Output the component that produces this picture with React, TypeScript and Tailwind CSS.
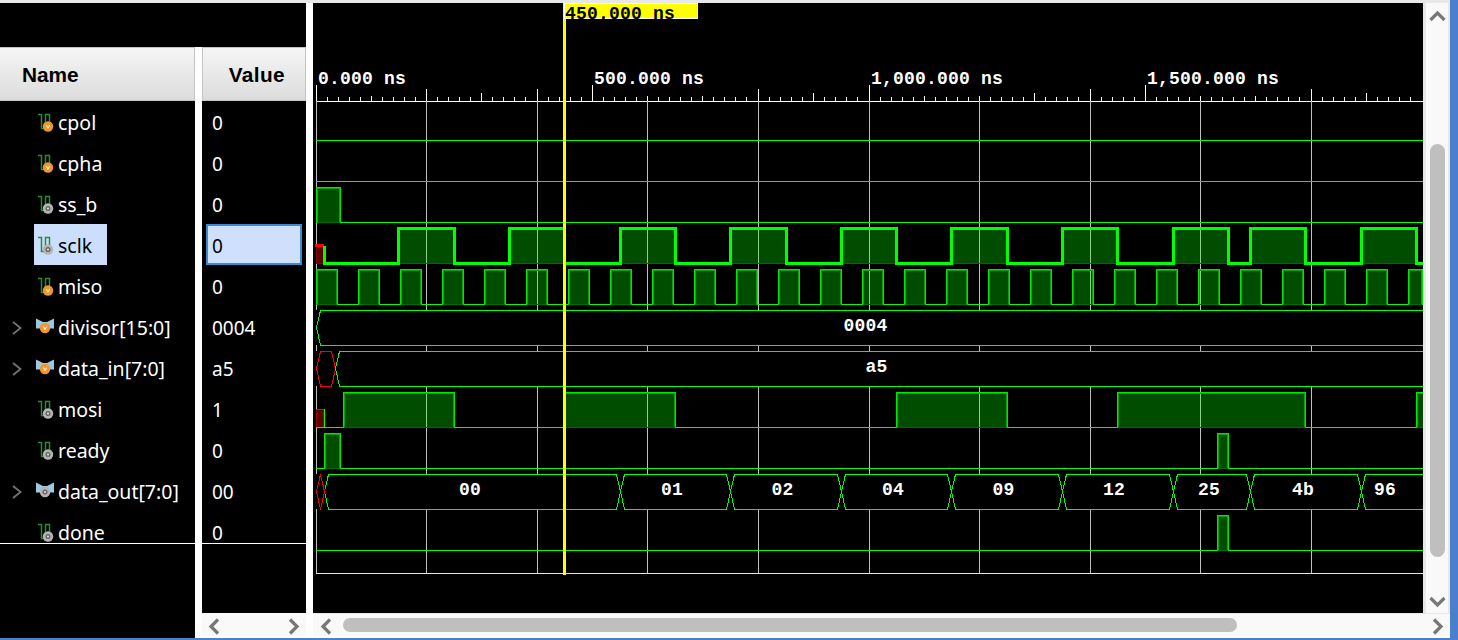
import { ReactNode } from 'react';

const GRID = [316, 426, 537, 647, 758, 869, 979, 1090, 1200, 1311];

const TICK_TOPS: Record<number, number> = {
  0: 85, 25: 85, 50: 85, 75: 85,
  10: 89, 20: 89, 40: 89, 70: 89, 90: 89,
  15: 93, 45: 93, 65: 93, 95: 93,
  5: 96, 30: 96, 35: 96, 55: 96, 60: 96, 80: 96, 85: 96,
};

const TICKS = Array.from({ length: 100 }, (_, k) => ({
  x: GRID[Math.floor(k / 10)] + Math.round((k % 10) * 11.05) + 0.5,
  top: TICK_TOPS[k] ?? 97,
}));

const SIGNALS = [
  { name: 'cpol', value: '0', kind: 'scalar', tone: 'orange' },
  { name: 'cpha', value: '0', kind: 'scalar', tone: 'orange' },
  { name: 'ss_b', value: '0', kind: 'scalar', tone: 'gray' },
  { name: 'sclk', value: '0', kind: 'scalar', tone: 'gray', selected: true },
  { name: 'miso', value: '0', kind: 'scalar', tone: 'orange' },
  { name: 'divisor[15:0]', value: '0004', kind: 'vector', tone: 'orange' },
  { name: 'data_in[7:0]', value: 'a5', kind: 'vector', tone: 'orange' },
  { name: 'mosi', value: '1', kind: 'scalar', tone: 'gray' },
  { name: 'ready', value: '0', kind: 'scalar', tone: 'gray' },
  { name: 'data_out[7:0]', value: '00', kind: 'vector', tone: 'gray' },
  { name: 'done', value: '0', kind: 'scalar', tone: 'gray' },
];

const SCLK_EDGES = [
  398.5, 454.5, 509.5, 564.5, 620.5, 675.5, 730.5, 786.5, 841.5, 896.5, 951.5, 1007.5, 1062.5,
  1117.5, 1173.5, 1228.5, 1250.5, 1305.5, 1361.5, 1416.5,
];

const MISO_PULSES = Array.from({ length: 27 }, (_, k): [number, number] => [
  316.5 + 42 * k,
  k === 26 ? 1422 : 337.5 + 42 * k,
]);

const OUT_EDGES = [620.5, 730.5, 841.5, 951.5, 1062.5, 1173.5, 1250.5, 1361.5];

const OUT_LABELS = [
  { x: 470, text: '00' },
  { x: 672, text: '01' },
  { x: 782.5, text: '02' },
  { x: 893, text: '04' },
  { x: 1003.5, text: '09' },
  { x: 1114, text: '12' },
  { x: 1209, text: '25' },
  { x: 1303, text: '4b' },
  { x: 1385, text: '96' },
];

function SignalIcon({ kind, tone }: { kind: string; tone: string }) {
  const center = kind === 'vector' ? { x: 9, y: 10 } : { x: 12, y: 13.5 };
  return (
    <svg width="18" height="20" viewBox="0 0 18 20" className="shrink-0">
      {kind === 'vector' ? (
        <path d="M0 0.5 L7 4 H11 L18 0.5 V10.5 H0 Z" fill="#9cc9e2" />
      ) : (
        <path d="M2 1.5 H5.5 V15.5 H9.5 V1.5 H13.5 V10" fill="none" stroke="#2b8a3a" strokeWidth="1.5" />
      )}
      {tone === 'orange' ? (
        <>
          <circle cx={center.x} cy={center.y} r="5.2" fill="#f0962a" />
          <path
            d={`M${center.x - 1.6} ${center.y - 1.5} L${center.x} ${center.y + 1.8} L${center.x + 1.6} ${center.y - 1.5}`}
            fill="none"
            stroke="#fff"
            strokeWidth="1"
          />
        </>
      ) : (
        <>
          <circle cx={center.x} cy={center.y} r="5.2" fill="#b4b4b4" />
          <circle cx={center.x} cy={center.y} r="2.5" fill="#666" />
          <circle cx={center.x} cy={center.y} r="1" fill="#eee" />
        </>
      )}
    </svg>
  );
}

function Expander() {
  return (
    <svg width="10" height="14" viewBox="0 0 10 14" className="shrink-0">
      <path d="M1 1 L8.5 7 L1 13" fill="none" stroke="#707070" strokeWidth="2" />
    </svg>
  );
}

function Arrow({ dir, className = '' }: { dir: 'up' | 'down' | 'left' | 'right'; className?: string }) {
  const d = {
    up: 'M1.5 10 L8.5 3 L15.5 10',
    down: 'M1.5 3 L8.5 10 L15.5 3',
    left: 'M10 1.5 L3 8.5 L10 15.5',
    right: 'M3 1.5 L10 8.5 L3 15.5',
  }[dir];
  const vertical = dir === 'up' || dir === 'down';
  return (
    <svg
      width={vertical ? 17 : 13}
      height={vertical ? 13 : 17}
      viewBox={vertical ? '0 0 17 13' : '0 0 13 17'}
      className={`shrink-0 ${className}`}
    >
      <path d={d} fill="none" stroke="#777" strokeWidth="3.2" />
    </svg>
  );
}

function Header({ children, className }: { children: ReactNode; className: string }) {
  return (
    <div
      className={`h-[54px] pt-[2px] flex items-center border border-[#c4c4c4] bg-gradient-to-b from-[#f6f6f6] to-[#dcdcdc] text-[20.8px] font-bold text-black font-['Liberation_Sans',sans-serif] ${className}`}
    >
      {children}
    </div>
  );
}

function Pulses({ pulses, hi, base }: { pulses: [number, number][]; hi: number; base: number }) {
  const segments: [number, number][] = [];
  let cursor = 316;
  pulses.forEach(([a, b]) => {
    if (a > cursor) segments.push([cursor, a]);
    cursor = b;
  });
  segments.push([cursor, 1423]);
  return (
    <g shapeRendering="crispEdges">
      {segments.map(([a, b]) => (
        <path key={a} d={`M${a} ${base + 0.5} H${b}`} stroke="#00ff00" fill="none" />
      ))}
      {pulses.map(([a, b]) => (
        <g key={a}>
          <rect x={a} y={hi + 0.5} width={b - a} height={base - hi} fill="#00ff00" fillOpacity="0.3" />
          <path d={`M${a} ${base + 0.5} H${b}`} stroke="#006c00" fill="none" />
          <path d={`M${a + 1} ${base} V${hi + 1.5} H${b - 1} V${base}`} stroke="#00a800" fill="none" />
          <path d={`M${a} ${base + 1} V${hi + 0.5} H${b} V${base + 1}`} stroke="#00e800" fill="none" />
        </g>
      ))}
    </g>
  );
}

function Sclk() {
  const hi = 228.5;
  const lo = 263.5;
  let d = `M324.5 245.5 V${lo}`;
  let up = true;
  SCLK_EDGES.forEach((x) => {
    d += ` H${x} V${up ? hi : lo}`;
    up = !up;
  });
  d += ' H1423';
  const fills: [number, number][] = [];
  for (let i = 0; i < SCLK_EDGES.length; i += 2) fills.push([SCLK_EDGES[i], SCLK_EDGES[i + 1]]);
  return (
    <g shapeRendering="crispEdges">
      {fills.map(([a, b]) => (
        <g key={a}>
          <rect x={a} y={hi} width={b - a} height={lo - hi} fill="#00ff00" fillOpacity="0.3" />
          <path d={`M${a} ${lo} H${b}`} stroke="#006c00" fill="none" />
        </g>
      ))}
      <rect x="316.5" y="245.5" width="7" height="18" fill="#5a0000" stroke="#8a0000" />
      <path d="M315 245.5 H324" stroke="#ff0000" strokeWidth="3" fill="none" />
      <path d={d} fill="none" stroke="#00ff00" strokeWidth="3" />
    </g>
  );
}

function Bus({ edges, top, start }: { edges: number[]; top: number; start: number }) {
  const mid = top + 17.5;
  const bot = top + 35;
  const half = 4;
  const points = [start, ...edges, 1450];
  return (
    <g shapeRendering="crispEdges">
      <rect x="316" y={top} width="1107" height="35" fill="#000" />
      {points.slice(0, -1).map((a, i) => {
        const b = points[i + 1];
        return (
          <path
            key={a}
            d={`M${a} ${mid} L${a + half} ${top + 0.5} H${b - half} L${b} ${mid} L${b - half} ${bot + 0.5} H${a + half} Z`}
            fill="none"
            stroke="#00ff00"
          />
        );
      })}
    </g>
  );
}

function Waveform() {
  return (
    <svg
      width="1110"
      height="610"
      viewBox="313 3 1110 610"
      className="block shrink-0 bg-black font-['Liberation_Mono',monospace] font-bold text-[18px] tracking-[0.2px]"
    >
      <defs>
        <clipPath id="cursor-label">
          <rect x="564" y="3" width="134" height="16" />
        </clipPath>
      </defs>

      {/* ruler */}
      <g shapeRendering="crispEdges" stroke="#fff">
        <path d="M316 101.5 H1423" />
        {TICKS.map((t) => (
          <path key={t.x} d={`M${t.x} ${t.top} V101`} />
        ))}
      </g>
      {[
        { x: 318, text: '0.000 ns' },
        { x: 594, text: '500.000 ns' },
        { x: 871, text: '1,000.000 ns' },
        { x: 1147, text: '1,500.000 ns' },
      ].map((l) => (
        <text key={l.x} x={l.x} y="84" fill="#fff">
          {l.text}
        </text>
      ))}

      {/* time grid */}
      <g shapeRendering="crispEdges" stroke="#c0c0c0">
        {GRID.map((x) => (
          <path key={x} d={`M${x + 0.5} 101 V573`} />
        ))}
        <path d="M316 573.5 H1423" stroke="#e4e4e4" />
      </g>

      {/* cpol, cpha */}
      <g shapeRendering="crispEdges" stroke="#00ff00">
        <path d="M316 140.5 H1423" />
        <path d="M316 181.5 H1423" />
      </g>

      <Pulses pulses={[[316.5, 340.5]]} hi={187} base={222} />
      <Sclk />
      <Pulses pulses={MISO_PULSES} hi={269} base={304} />

      <Bus edges={[]} top={310} start={316.5} />
      <text x="865.5" y="331" fill="#fff" textAnchor="middle">
        0004
      </text>

      <g shapeRendering="crispEdges">
        <rect x="316" y="351" width="1107" height="35" fill="#000" />
        <path
          d="M316.5 368.5 L320.5 351.5 H331.5 L335.5 368.5 L331.5 386.5 H320.5 Z"
          fill="none"
          stroke="#ff0000"
        />
        <path d="M1450 351.5 H339.5 L335.5 368.5 L339.5 386.5 H1450" fill="none" stroke="#00ff00" />
      </g>
      <text x="876.5" y="372" fill="#fff" textAnchor="middle">
        a5
      </text>

      <Pulses
        pulses={[
          [343.5, 454.5],
          [564.5, 675.5],
          [896.5, 1007.5],
          [1117.5, 1305.5],
          [1416.5, 1424],
        ]}
        hi={392}
        base={427}
      />
      <g shapeRendering="crispEdges">
        <rect x="316.5" y="409.5" width="7" height="18" fill="#5a0000" stroke="#a00000" />
        <path d="M316 427.5 H324 M324.5 427.5 V409.5 H316" fill="none" stroke="#00ff00" />
        <path d="M316 409.5 H324" stroke="#ff0000" />
      </g>

      <Pulses
        pulses={[
          [324.5, 340.5],
          [1217.5, 1228.5],
        ]}
        hi={433}
        base={468}
      />

      <Bus edges={OUT_EDGES} top={474} start={324.5} />
      <path
        d="M316.5 491.5 L320.5 474.5 L324.5 491.5 L320.5 509.5 Z"
        fill="none"
        stroke="#ff0000"
        shapeRendering="crispEdges"
      />
      {OUT_LABELS.map((l) => (
        <text key={l.x} x={l.x} y="495" fill="#fff" textAnchor="middle">
          {l.text}
        </text>
      ))}

      <Pulses pulses={[[1217.5, 1228.5]]} hi={515} base={550} />

      {/* cursor */}
      <rect x="563" y="3" width="3" height="572" fill="#ffff00" />
      <rect x="564.5" y="3.5" width="133" height="15" fill="#ffff00" stroke="#fff" shapeRendering="crispEdges" />
      <text x="565" y="19" fill="#000" clipPath="url(#cursor-label)">
        450.000 ns
      </text>
    </svg>
  );
}

export default function App() {
  const lastIndex = SIGNALS.length - 1;
  return (
    <div className="w-[1458px] h-[640px] overflow-hidden bg-[#4a7fcf] font-['Noto_Sans',sans-serif]">
      <div className="w-[1450px] h-[638px] flex flex-col bg-white">
        <div className="h-[3px] shrink-0 bg-[#e8e8e8]" />
        <div className="flex flex-1 min-h-0">
          {/* left side: name and value panes */}
          <div className="w-[306px] shrink-0 flex flex-col bg-black">
            <div className="h-[44px] shrink-0" />
            <div className="flex flex-1 min-h-0 bg-white gap-[7px]">
              <div className="w-[195px] bg-black">
                <Header className="pl-[22px] border-l-0">Name</Header>
                <div className="h-[443px] border-b border-white">
                  {SIGNALS.map((s, i) => (
                    <div
                      key={s.name}
                      className={`flex ${i === lastIndex ? 'h-[32px] items-end' : 'h-[41px] items-center'}`}
                    >
                      <div className="w-[34px] pl-[12px] pt-[2px] flex">{s.kind === 'vector' && <Expander />}</div>
                      <div
                        className={`h-full pl-[2px] pt-[2px] flex gap-[4px] text-[19.5px] leading-[20px] ${i === lastIndex ? 'items-end' : 'items-center'} ${s.selected ? 'w-[73px] bg-[#cbdffc] text-black' : 'text-white'}`}
                      >
                        <SignalIcon kind={s.kind} tone={s.tone} />
                        <span>{s.name}</span>
                      </div>
                    </div>
                  ))}
                </div>
              </div>
              <div className="w-[104px] flex flex-col bg-black">
                <Header className="justify-end pr-[20px] tracking-[0.4px]">Value</Header>
                <div className="h-[443px] border-b border-white">
                  {SIGNALS.map((s, i) => (
                    <div
                      key={s.name}
                      className={`px-[4px] flex text-[19px] leading-[20px] ${i === lastIndex ? 'h-[32px] items-end' : 'h-[41px] items-center'}`}
                    >
                      <div
                        className={`w-full h-full pt-[2px] flex ${i === lastIndex ? 'items-end' : 'items-center'} ${s.selected ? 'bg-[#cfe0fc] text-black border-2 border-[#3d8bcd] pl-[4px]' : 'text-white pl-[6px]'}`}
                      >
                        {s.value}
                      </div>
                    </div>
                  ))}
                </div>
                <div className="flex-1" />
                <div className="h-[23px] shrink-0 bg-[#f9f9f9] flex items-center justify-between px-[6px]">
                  <Arrow dir="left" className="mt-[3px]" />
                  <Arrow dir="right" className="mt-[3px]" />
                </div>
                <div className="h-[2px] shrink-0 bg-white" />
              </div>
            </div>
          </div>
          <div className="w-[7px] shrink-0" />

          {/* right side: waveform and scrollbars */}
          <div className="flex-1 min-w-0 flex flex-col">
            <div className="h-[610px] shrink-0 flex">
              <Waveform />
              <div className="flex-1 flex flex-col items-center bg-[#f9f9f9] border-l-[3px] border-r-2 border-[#e8e8e8] pt-[7px] pb-[5px]">
                <Arrow dir="up" />
                <div className="w-[15px] h-[413px] mt-[121px] rounded-full bg-[#bfbfbf]" />
                <div className="flex-1" />
                <Arrow dir="down" />
              </div>
            </div>
            <div className="h-[23px] shrink-0 bg-[#f9f9f9] border-t border-[#e8e8e8] flex items-center pl-[7px] pr-[6px]">
              <Arrow dir="left" className="mt-[3px]" />
              <div className="w-[894px] h-[14px] ml-[10px] rounded-full bg-[#bfbfbf]" />
              <div className="flex-1" />
              <Arrow dir="right" className="mt-[3px]" />
            </div>
          </div>
        </div>
      </div>
    </div>
  );
}
